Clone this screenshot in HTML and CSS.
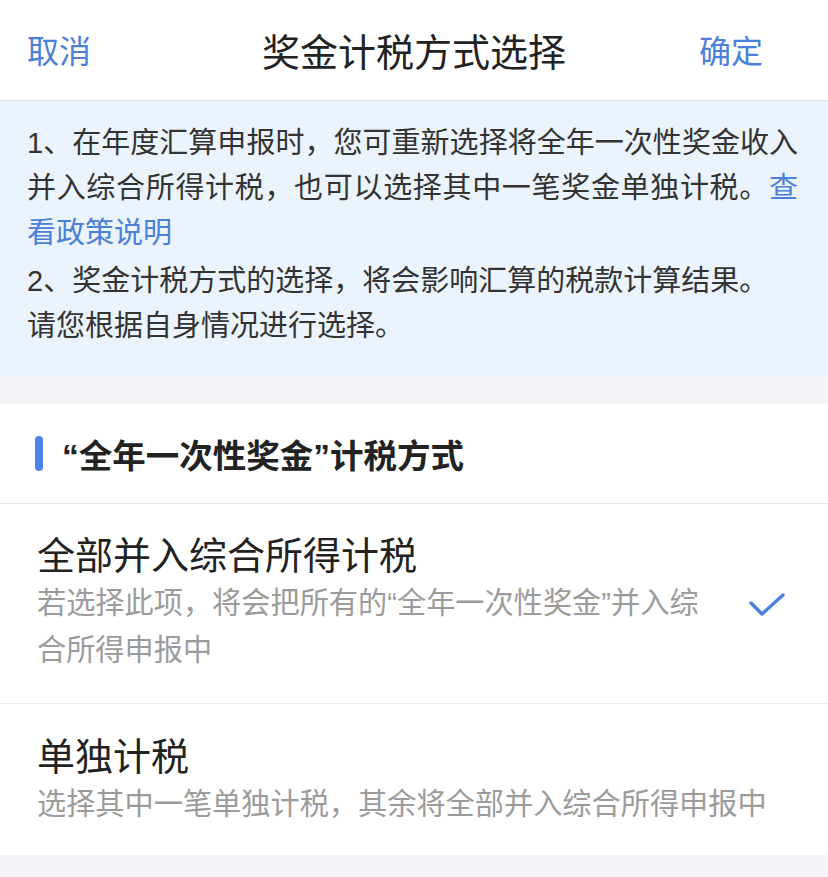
FILE: index.html
```html
<!DOCTYPE html>
<html>
<head>
	<title>奖金计税方式选择</title>
	<meta name="viewport" content="width=device-width">
	<link rel="stylesheet" href="styles.css">
</head>
<body>
	<div class="nav">
		<span class="nav-btn left">取消</span>
		<span class="nav-title">奖金计税方式选择</span>
		<span class="nav-btn right">确定</span>
	</div>

	<div class="notice">
		<p>1、在年度汇算申报时，您可重新选择将全年一次性奖金收入并入综合所得计税，也可以选择其中一笔奖金单独计税。<a class="link">查看政策说明</a></p>
		<p>2、奖金计税方式的选择，将会影响汇算的税款计算结果。<br>请您根据自身情况进行选择。</p>
	</div>

	<div class="section">
		<div class="section-head">
			<i class="bar"></i>
			<strong>“全年一次性奖金”计税方式</strong>
		</div>
		<div class="option">
			<div class="option-text">
				<div class="option-title">全部并入综合所得计税</div>
				<div class="option-sub">若选择此项，将会把所有的“全年一次性奖金”并入综合所得申报中</div>
			</div>
			<svg class="check" viewBox="0 0 36 24" width="36" height="24">
				<path d="M2 10 L13 21 L34 2" fill="none" stroke="#4a80e0" stroke-width="3.4" stroke-linecap="round" stroke-linejoin="round"/>
			</svg>
		</div>
		<div class="option">
			<div class="option-text">
				<div class="option-title">单独计税</div>
				<div class="option-sub">选择其中一笔单独计税，其余将全部并入综合所得申报中</div>
			</div>
		</div>
	</div>
</body>
</html>
```

FILE: styles.css
```css
*{
	margin: 0;
	padding: 0;
	box-sizing: border-box;
}
body{
	background: #f2f4f7;
	font-family: "Liberation Sans", "Noto Sans CJK SC", sans-serif;
	color: #222;
}
.nav{
	height: 101px;
	display: grid;
	grid-template-columns: 1fr auto 1fr;
	align-items: center;
	padding: 0 27px 2px 27px;
	background: #fff;
	border-bottom: 1px solid #e3e6ea;
}
.nav-btn{
	font-size: 32px;
	color: #4a80d8;
}
.nav-btn.right{
	justify-self: end;
	margin-right: 38px;
}
.nav-title{
	font-size: 38px;
	color: #222;
}
.notice{
	background: #ebf3fc;
	padding: 20px 30px 27px 27px;
	font-size: 29px;
	line-height: 45px;
	color: #333;
	text-align: justify;
}
.notice p + p{
	margin-top: 3px;
}
.link{
	color: #4a80d8;
}
.section{
	margin-top: 28px;
	background: #fff;
	margin-bottom: 20px;
}
.section-head{
	height: 100px;
	display: flex;
	align-items: center;
	padding-left: 35px;
	border-bottom: 1px solid #e8e8e8;
}
.bar{
	width: 8px;
	height: 35px;
	border-radius: 4px;
	background: #4f82e8;
	margin-right: 19px;
}
.section-head strong{
	font-size: 33.5px;
	color: #222;
}
.option{
	display: flex;
	align-items: center;
	padding: 28px 0 29px 37px;
	border-bottom: 1px solid #ececec;
}
.option:last-child{
	border-bottom: none;
	padding-top: 29px;
	padding-bottom: 27px;
}
.option-text{
	flex: 1;
}
.option-title{
	font-size: 38px;
	line-height: 48px;
	color: #222;
}
.option-sub{
	font-size: 29.2px;
	line-height: 47px;
	color: #9b9b9b;
}
.check{
	flex: none;
	margin: 4px 43px 0 30px;
}
```
